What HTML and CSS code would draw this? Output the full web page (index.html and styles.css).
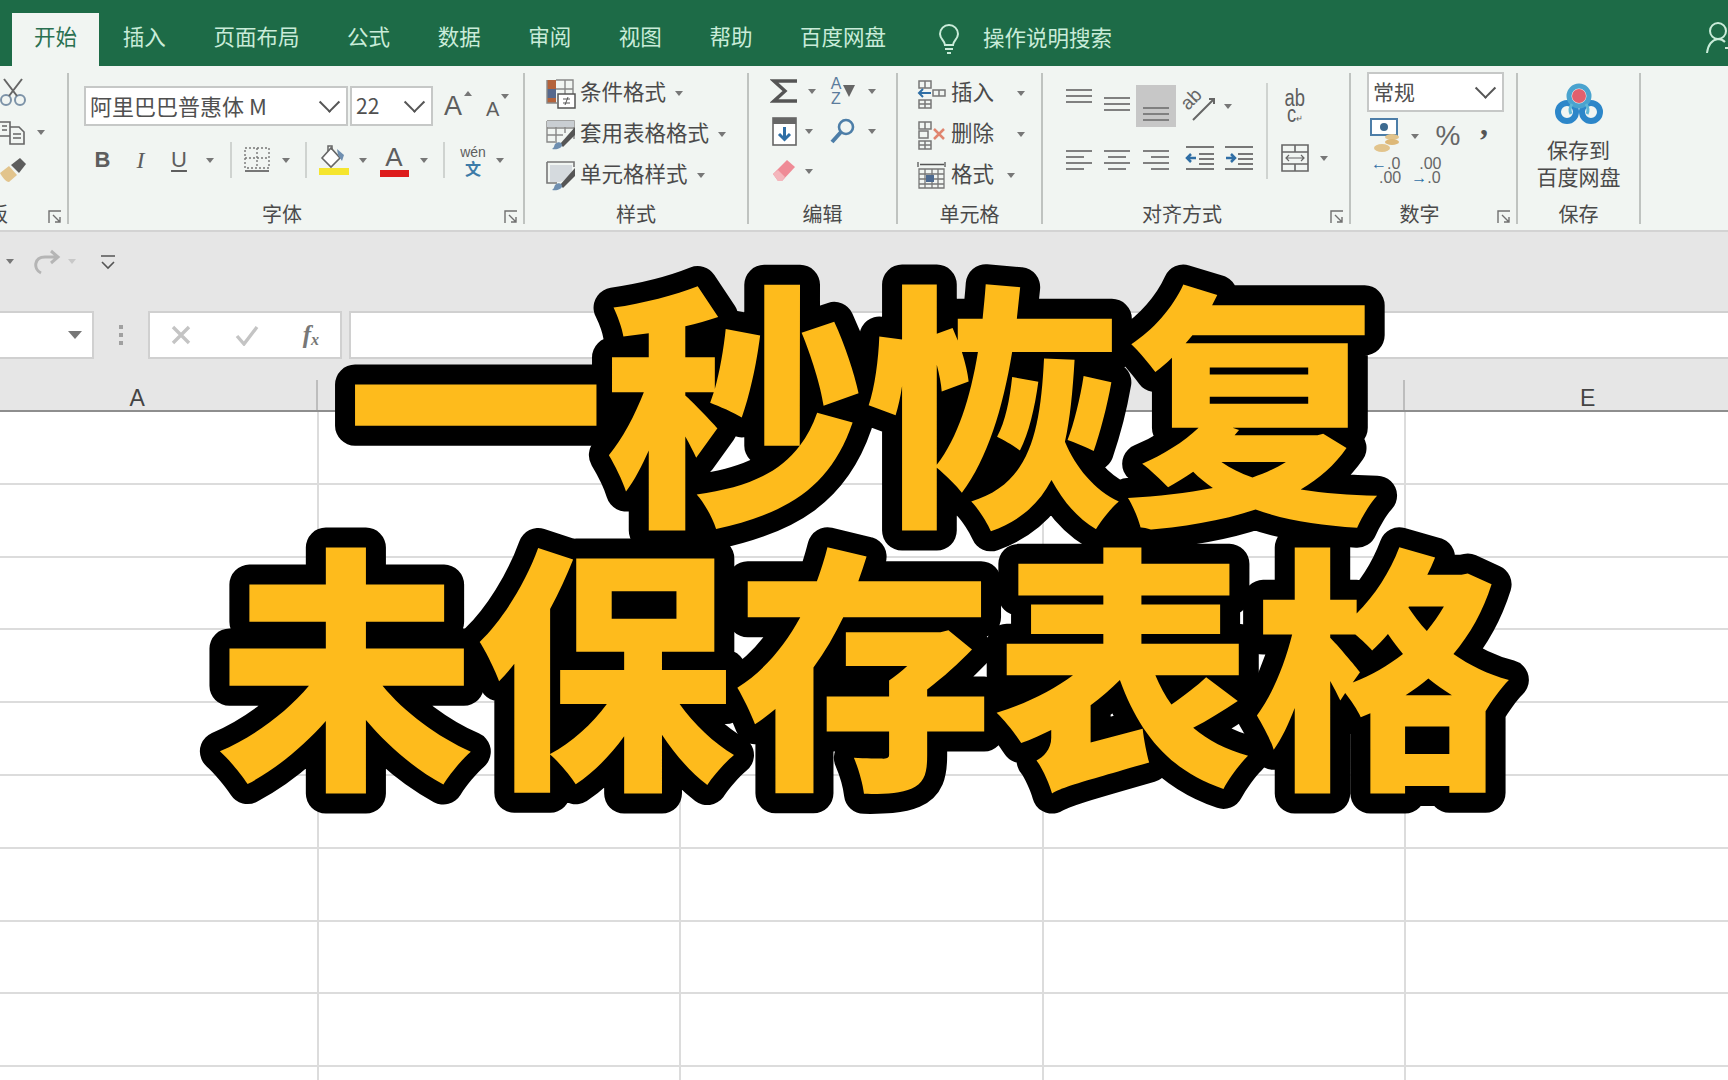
FILE: index.html
```html
<!DOCTYPE html>
<html lang="zh-CN">
<head>
  <meta charset="UTF-8">
  <title>一秒恢复未保存表格</title>
  <link rel="stylesheet" href="styles.css">
</head>
<body>
  <!-- Pestañas -->
  <div class="tabbar">
    <div class="tab active">开始</div>
    <div class="tab">插入</div>
    <div class="tab">页面布局</div>
    <div class="tab">公式</div>
    <div class="tab">数据</div>
    <div class="tab">审阅</div>
    <div class="tab">视图</div>
    <div class="tab">帮助</div>
    <div class="tab">百度网盘</div>
    <svg class="bulb" width="24" height="32" viewBox="0 0 24 32" fill="none" stroke="#c9ecd9" stroke-width="2"><path d="M8 22c0-4-5-6-5-11a9 9 0 0 1 18 0c0 5-5 7-5 11z"/><path d="M8 26h8M10 30h4"/></svg>
    <div class="search-text">操作说明搜索</div>
    <svg class="share" width="30" height="36" viewBox="0 0 30 36" fill="none" stroke="#c9ecd9" stroke-width="2"><circle cx="13" cy="11" r="8"/><path d="M2 33c1-8 5-13 11-14 3 0 5 1 7 3M20 28h10M25 23v10"/></svg>
  </div>

  <!-- Cinta -->
  <div class="ribbon">
    <div class="group group-clip">
      <div class="clip-rows">
        <svg width="26" height="30" viewBox="0 0 26 30" fill="none" stroke="#666" stroke-width="2"><circle cx="6" cy="23" r="5" stroke="#7d93a8"/><circle cx="20" cy="23" r="5" stroke="#7d93a8"/><path d="M9 19L22 2M17 19L4 2"/></svg>
        <div class="tool-row">
          <svg width="26" height="26" viewBox="0 0 26 26" fill="none" stroke="#666" stroke-width="1.6"><path d="M0 3h10v14H0M10 8h9l5 5v12H10z"/><path d="M13 15h8M13 19h8M2 7h5M2 11h5"/></svg>
          <span class="caret caret-copy"></span>
        </div>
        <svg width="28" height="28" viewBox="0 0 28 28"><path d="M0 16l9-7 8 9-8 7c-3 0-7-5-9-9z" fill="#e2c48c"/><path d="M11 8l9-7 6 6-7 9z" fill="#5d5d5d"/></svg>
      </div>
      <div class="group-label clip-label">剪贴板</div>
      <svg class="launcher" width="14" height="14" viewBox="0 0 14 14" fill="none" stroke="#707070" stroke-width="1.400"><path d="M1 13V1h12M5 5l7 7M12 7v5H7"/></svg>
    </div>

    <div class="group group-font">
      <div class="font-boxes">
        <div class="combo font-name"><span>阿里巴巴普惠体 M</span><span class="chevron"></span></div>
        <div class="combo font-size"><span>22</span><span class="chevron"></span></div>
        <div class="grow-a">A<span class="mini-up"></span></div>
        <div class="shrink-a">A<span class="mini-down"></span></div>
      </div>
      <div class="font-tools">
        <span class="bold">B</span>
        <span class="italic">I</span>
        <span class="under">U</span>
        <span class="caret"></span>
        <span class="vsep"></span>
        <svg width="26" height="26" viewBox="0 0 26 26" fill="none" stroke="#777" stroke-width="1.4" stroke-dasharray="2 2"><path d="M1 1h24v20H1zM13 1v20M1 11h24"/><path d="M1 24h24" stroke-dasharray="none" stroke-width="2"/></svg>
        <span class="caret"></span>
        <span class="vsep"></span>
        <svg width="32" height="32" viewBox="0 0 32 32"><path d="M4 14l9-10 9 10-9 9z" fill="#fff" stroke="#666" stroke-width="1.6"/><path d="M10 7V2h4v4" fill="none" stroke="#666" stroke-width="1.5"/><path d="M19 5l7 6-2 6-4-6z" fill="#6f8fb0"/><rect x="1" y="24" width="30" height="7" fill="#f5e52e"/></svg>
        <span class="caret"></span>
        <div class="color-a">A</div>
        <span class="caret"></span>
        <span class="vsep"></span>
        <div class="wen"><span>wén</span><b>文</b></div>
        <span class="caret"></span>
      </div>
      <div class="group-label with-launcher">字体</div>
      <svg class="launcher" width="14" height="14" viewBox="0 0 14 14" fill="none" stroke="#707070" stroke-width="1.400"><path d="M1 13V1h12M5 5l7 7M12 7v5H7"/></svg>
    </div>

    <div class="group group-styles">
      <div class="style-row">
        <svg width="30" height="30" viewBox="0 0 30 30"><path d="M1 1h9v9H1z" fill="#b4623a"/><path d="M1 10h9v9H1z" fill="#56688c"/><path d="M1 19h9v5H1z" fill="#b4623a"/><path d="M10 1h17v14M1 1v23h10M19 1v14M10 10h17" fill="none" stroke="#888" stroke-width="1.4"/><rect x="12" y="15" width="17" height="14" fill="#fff" stroke="#555" stroke-width="1.5"/><path d="M17 20h7M17 24h7M22 18l-3 8" stroke="#555" fill="none"/></svg>
        <span class="row-text">条件格式</span><span class="caret"></span>
      </div>
      <div class="style-row">
        <svg width="30" height="30" viewBox="0 0 30 30"><path d="M1 1h27v18M1 1v21h10M1 8h27M10 1v20M19 1v12M1 15h16" fill="none" stroke="#888" stroke-width="1.4"/><path d="M1 1h27v6H1z" fill="#c9ced2"/><path d="M29 7L14 24l3 3 12-12z" fill="#555"/><path d="M9 24c3-3 7-2 7 1s-5 5-10 4c2-1 2-3 3-5z" fill="#6f8fb0"/></svg>
        <span class="row-text">套用表格格式</span><span class="caret"></span>
      </div>
      <div class="style-row">
        <svg width="30" height="30" viewBox="0 0 30 30"><path d="M1 1h27v5M1 1v21h10" fill="none" stroke="#777" stroke-width="1.6"/><path d="M4 4h22v12L14 21H4z" fill="#d5dade"/><path d="M29 7L14 24l3 3 12-12z" fill="#555"/><path d="M9 24c3-3 7-2 7 1s-5 5-10 4c2-1 2-3 3-5z" fill="#6f8fb0"/></svg>
        <span class="row-text">单元格样式</span><span class="caret"></span>
      </div>
      <div class="group-label">样式</div>
    </div>

    <div class="group group-edit">
      <div class="edit-grid">
        <svg width="28" height="26" viewBox="0 0 28 26" fill="none" stroke="#555" stroke-width="3.4"><path d="M27 3H4l11 10L4 23h23"/></svg>
        <span class="caret"></span>
        <div class="sort-icon"><span class="az">A<br>Z</span><span class="funnel"></span></div>
        <span class="caret"></span>
        <svg width="25" height="29" viewBox="0 0 25 29"><rect x="1" y="1" width="23" height="27" fill="#fff" stroke="#666" stroke-width="1.6"/><rect x="1" y="1" width="23" height="6" fill="#666"/><path d="M12.500 10v12M7 17l5.500 5.500L18 17" fill="none" stroke="#2f6ea5" stroke-width="3"/></svg>
        <span class="caret caret-left"></span>
        <svg width="26" height="26" viewBox="0 0 26 26" fill="none"><circle cx="16" cy="9" r="7" stroke="#4d7ea8" stroke-width="2.600"/><path d="M11 14L2 24" stroke="#4d7ea8" stroke-width="4"/></svg>
        <span class="caret"></span>
        <svg width="24" height="24" viewBox="0 0 24 24"><path d="M1 15L15 1l8 7L10 22H6z" fill="#ef8b96"/><path d="M1 15l5 7h4l3-4-7-7z" fill="#f4b6bc"/></svg>
        <span class="caret caret-left"></span>
      </div>
      <div class="group-label">编辑</div>
    </div>

    <div class="group group-cells">
      <div class="cell-row">
        <svg width="30" height="30" viewBox="0 0 30 30" fill="none" stroke="#777" stroke-width="1.5"><path d="M2 2h12v7H2zM2 2v7M8 2v7M2 21h12v8H2zM8 21v8M2 25h12M16 11h12v6H16zM22 11v6"/><path d="M2 14h12M6 10l-4 4 4 4" stroke="#2f6ea5" stroke-width="2"/></svg>
        <span class="row-text">插入</span><span class="caret caret-far"></span>
      </div>
      <div class="cell-row">
        <svg width="30" height="30" viewBox="0 0 30 30" fill="none" stroke="#777" stroke-width="1.5"><path d="M2 2h12v7H2zM8 2v7M2 21h12v8H2zM8 21v8M2 25h12M2 11h9v7H2z"/><path d="M17 9l10 10M27 9L17 19" stroke="#e0856f" stroke-width="2.500"/></svg>
        <span class="row-text">删除</span><span class="caret caret-far"></span>
      </div>
      <div class="cell-row">
        <svg width="30" height="30" viewBox="0 0 30 30" fill="none" stroke="#777" stroke-width="1.3"><path d="M1 1v5M28 1v5M3 3.500h24" stroke="#555"/><path d="M2 8h25v19H2zM2 13h25M2 18h25M2 23h25M8 8v19M15 8v19M21 8v19"/><rect x="9" y="14" width="8" height="7" fill="#4d6a90" stroke="none"/></svg>
        <span class="row-text">格式</span><span class="caret"></span>
      </div>
      <div class="group-label">单元格</div>
    </div>

    <div class="group group-align">
      <div class="align-grid">
        <span class="lines lines-top"><i></i><i></i><i></i></span>
        <span class="lines lines-mid"><i></i><i></i><i></i></span>
        <span class="lines lines-bottom"><i></i><i></i><i></i></span>
        <svg class="rot-icon" width="32" height="32" viewBox="0 0 32 32" fill="none" stroke="#666" stroke-width="2"><path d="M9 30L29 10M25 9l5 0 0 5"/><text class="rot-text" transform="translate(4 21) rotate(-45)">ab</text></svg>
        <span class="caret caret-start"></span>
        <span class="vsep vsep-tall"></span>
        <div class="wrap-icon">ab<br>c<small>↵</small></div>
        <span></span>
        <span class="lines lines-left"><i></i><i></i><i></i><i></i></span>
        <span class="lines lines-center"><i></i><i></i><i></i><i></i></span>
        <span class="lines lines-right"><i></i><i></i><i></i><i></i></span>
        <svg width="30" height="26" viewBox="0 0 30 26" fill="none" stroke="#777" stroke-width="2"><path d="M1 2h28M14 9h15M14 14h15M14 19h15M1 24h28"/><path d="M11 13H2M6 9l-4 4 4 4" stroke="#2f6ea5" stroke-width="2.500"/></svg>
        <svg width="30" height="26" viewBox="0 0 30 26" fill="none" stroke="#777" stroke-width="2"><path d="M1 2h28M14 9h15M14 14h15M14 19h15M1 24h28"/><path d="M2 13h9M7 9l4 4-4 4" stroke="#2f6ea5" stroke-width="2.500"/></svg>
        <svg width="28" height="28" viewBox="0 0 28 28" fill="none" stroke="#666" stroke-width="1.600"><path d="M1 1h26v26H1zM1 8h26M1 20h26M14 1v7M14 20v7"/><path d="M5 14h18M8 11l-3 3 3 3M20 11l3 3-3 3" stroke-width="1.200"/></svg>
        <span class="caret"></span>
      </div>
      <div class="group-label with-launcher">对齐方式</div>
      <svg class="launcher" width="14" height="14" viewBox="0 0 14 14" fill="none" stroke="#707070" stroke-width="1.400"><path d="M1 13V1h12M5 5l7 7M12 7v5H7"/></svg>
    </div>

    <div class="group group-number">
      <div class="combo number-format"><span>常规</span><span class="chevron"></span></div>
      <div class="number-tools">
        <svg width="32" height="36" viewBox="0 0 32 36"><rect x="1" y="1" width="26" height="16" fill="#fff" stroke="#4d7ea8" stroke-width="2"/><circle cx="14" cy="9" r="4" fill="#3d6a90"/><ellipse cx="22" cy="19" rx="7" ry="3" fill="#e2c48c"/><ellipse cx="22" cy="24" rx="7" ry="3" fill="#ddb878"/><ellipse cx="12" cy="30" rx="8" ry="4" fill="#e2c48c"/></svg>
        <span class="caret"></span>
        <span class="percent">%</span>
        <span class="comma">,</span>
      </div>
      <div class="decimal-tools">
        <div class="decimal"><span><b>←</b>.0</span><span class="dec-pad">.00</span></div>
        <div class="decimal"><span class="dec-pad">.00</span><span><b>→</b>.0</span></div>
      </div>
      <div class="group-label with-launcher">数字</div>
      <svg class="launcher" width="14" height="14" viewBox="0 0 14 14" fill="none" stroke="#707070" stroke-width="1.400"><path d="M1 13V1h12M5 5l7 7M12 7v5H7"/></svg>
    </div>

    <div class="group group-save">
      <svg class="pan-logo" width="48" height="42" viewBox="0 0 48 42" fill="none"><circle cx="12" cy="29" r="9" stroke="#2c86c9" stroke-width="6"/><circle cx="36" cy="29" r="9" stroke="#2c86c9" stroke-width="6"/><circle cx="24" cy="13" r="10" stroke="#4aa3cf" stroke-width="5"/><circle cx="24" cy="13" r="7" fill="#e2606e"/><path d="M17 21c-2 3-3 6-1 10M31 21c2 3 3 6 1 10" stroke="#5fb7d6" stroke-width="3"/></svg>
      <div class="save-text">保存到<br>百度网盘</div>
      <div class="group-label">保存</div>
    </div>
  </div>

  <!-- Barra de acceso rápido y fórmulas -->
  <div class="qat">
    <span class="caret caret-qat"></span>
    <svg width="30" height="26" viewBox="0 0 30 26" fill="none" stroke="#b5b5b5" stroke-width="3"><path d="M9 24C1 20 2 8 13 8h12M19 2l7 6-7 6"/></svg>
    <span class="caret caret-light"></span>
    <svg class="qat-more" width="16" height="16" viewBox="0 0 16 16" fill="none" stroke="#555" stroke-width="1.600"><path d="M1 2h14M2 8l6 6 6-6"/></svg>
  </div>
  <div class="formula-bar">
    <div class="name-box"><span class="caret caret-name"></span></div>
    <div class="dots"><i></i><i></i><i></i></div>
    <div class="fx-box">
      <svg width="22" height="22" viewBox="0 0 22 22" stroke="#c4c4c4" stroke-width="3.400"><path d="M3 3l16 16M19 3L3 19"/></svg>
      <svg width="24" height="22" viewBox="0 0 24 22" fill="none" stroke="#c4c4c4" stroke-width="3.400"><path d="M2 12l7 8L22 3"/></svg>
      <span class="fx">f<sub>x</sub></span>
    </div>
    <div class="formula-input"></div>
  </div>

  <!-- Hoja -->
  <div class="col-headers">
    <div class="col-head">A</div>
    <div class="col-head"></div>
    <div class="col-head"></div>
    <div class="col-head"></div>
    <div class="col-head last">E</div>
  </div>
  <div class="sheet"></div>

  <!-- Título sobre la hoja -->
  <svg class="title" width="1728" height="1080" viewBox="0 0 1728 1080">
    <text x="864" y="506">一秒恢复</text>
    <text x="864" y="769">未保存表格</text>
  </svg>
</body>
</html>
```

FILE: styles.css
```css
/* Estilos generales */
html, body {
  margin: 0;
  padding: 0;
  height: 1080px;
  overflow: hidden;
}

body {
  position: relative;
  width: 1728px;
  background: #fff;
  font-family: "Noto Sans CJK SC", "Noto Sans", sans-serif;
  color: #4a4a4a;
}

/* Pestañas */
.tabbar {
  height: 66px;
  background: #1d6b47;
  display: flex;
  align-items: flex-end;
  padding-left: 12px;
  box-sizing: border-box;
  color: #c9ecd9;
  font-size: 21.500px;
  position: relative;
}

.tab {
  height: 53px;
  line-height: 46px;
  padding: 0 23.800px;
}

.tab.active {
  background: #f1f5f2;
  color: #2a7051;
  padding: 0 22px;
}

.bulb {
  margin: 0 0 11px 27px;
}

.search-text {
  height: 53px;
  line-height: 47px;
  margin-left: 22px;
}

.share {
  position: absolute;
  right: -7px;
  top: 20px;
}

/* Cinta */
.ribbon {
  height: 166px;
  box-sizing: border-box;
  background: #f1f5f2;
  border-bottom: 2px solid #d3d3d3;
  padding-top: 7px;
  display: flex;
}

.group {
  position: relative;
  height: 151px;
  box-sizing: border-box;
  border-right: 2px solid #bfc3c0;
  flex: none;
  display: flex;
  flex-direction: column;
}

.group-label {
  position: absolute;
  left: 0;
  right: 0;
  bottom: -5px;
  text-align: center;
  font-size: 20px;
  line-height: 30px;
}

.group-label.with-launcher {
  right: 28px;
}

.clip-label {
  left: -52px;
  right: auto;
  width: 60px;
  text-align: right;
}

.launcher {
  position: absolute;
  right: 5px;
  bottom: 0;
}

.caret {
  display: inline-block;
  width: 0;
  height: 0;
  border-left: 4.500px solid transparent;
  border-right: 4.500px solid transparent;
  border-top: 5px solid #777;
  flex: none;
}

.vsep {
  width: 2px;
  height: 36px;
  background: #cfd3d0;
}

.row-text {
  font-size: 21.500px;
  line-height: 30px;
  padding-bottom: 6px;
  white-space: nowrap;
}

/* Portapapeles */
.group-clip {
  width: 69px;
}

.clip-rows {
  display: flex;
  flex-direction: column;
  gap: 12px;
  margin-top: 4px;
}

.tool-row {
  display: flex;
  align-items: center;
}

.caret-copy {
  margin-left: 11px;
}

/* Fuente */
.group-font {
  width: 456px;
  padding-left: 15px;
}

.font-boxes {
  display: flex;
  align-items: center;
  margin-top: 13px;
}

.combo {
  height: 40px;
  box-sizing: border-box;
  background: #fff;
  border: 2px solid #c6c8c7;
  display: flex;
  align-items: center;
  justify-content: space-between;
  padding: 0 9px 0 4px;
  font-size: 21px;
  color: #505050;
}

.combo > span:first-child {
  padding-bottom: 3px;
}

.font-name {
  width: 264px;
  font-size: 22px;
}

.font-size {
  width: 83px;
  margin-left: 2px;
}

.chevron {
  width: 15px;
  height: 15px;
  box-sizing: border-box;
  border-right: 2px solid #555;
  border-bottom: 2px solid #555;
  transform: rotate(45deg) translate(-3px, -3px);
}

.grow-a, .shrink-a {
  position: relative;
  font-family: "Liberation Sans", sans-serif;
  color: #5e5e5e;
}

.grow-a {
  font-size: 27px;
  margin-left: 11px;
}

.shrink-a {
  font-size: 20px;
  margin-left: 24px;
  top: 3px;
}

.mini-up, .mini-down {
  position: absolute;
  top: 0;
  right: -10px;
  width: 0;
  height: 0;
  border-left: 4px solid transparent;
  border-right: 4px solid transparent;
}

.mini-up {
  border-bottom: 5px solid #777;
}

.mini-down {
  border-top: 5px solid #777;
  top: -4px;
}

.font-tools {
  display: grid;
  grid-template-columns: 37px 39px 38px 24px 18px 34px 24px 16px 40px 18px 44px 16px 24px 34px 20px;
  justify-items: center;
  align-items: center;
  height: 38px;
  margin-top: 15px;
  font-family: "Liberation Sans", sans-serif;
  font-size: 22px;
  color: #5e5e5e;
}

.bold {
  font-weight: bold;
}

.italic {
  font-family: "Liberation Serif", serif;
  font-style: italic;
  font-size: 24px;
}

.under {
  text-decoration: underline;
  text-underline-offset: 3px;
}

.color-a {
  width: 29px;
  text-align: center;
  font-size: 26px;
  line-height: 26px;
  height: 26px;
  border-bottom: 7px solid #dd1c1c;
}

.wen {
  display: flex;
  flex-direction: column;
  align-items: center;
  font-size: 14px;
  line-height: 15px;
}

.wen b {
  font-family: "Noto Sans CJK SC", sans-serif;
  color: #3d7ba8;
  font-size: 16px;
  line-height: 16px;
}

/* Estilos de celda */
.group-styles {
  width: 224px;
  padding-left: 21px;
}

.style-row, .cell-row {
  display: flex;
  align-items: center;
  height: 41px;
  gap: 4px;
}

.style-row .caret {
  margin-left: 5px;
}

/* Edición */
.group-edit {
  width: 149px;
  padding-left: 16px;
}

.edit-grid {
  display: grid;
  grid-template-columns: 38px 18px 44px 14px;
  grid-template-rows: 40px 40px 40px;
  justify-items: center;
  align-items: center;
  margin-top: -2px;
}

.caret-left {
  margin-right: 6px;
}

.sort-icon {
  display: flex;
  align-items: center;
  gap: 2px;
}

.az {
  font-family: "Liberation Sans", sans-serif;
  font-size: 16px;
  line-height: 15px;
  color: #5b7c9c;
  text-align: center;
}

.funnel {
  width: 0;
  height: 0;
  border-left: 6px solid transparent;
  border-right: 6px solid transparent;
  border-top: 12px solid #666;
}

/* Celdas */
.group-cells {
  width: 145px;
  padding-left: 19px;
}

.cell-row .caret {
  margin-left: 9px;
}

.cell-row .caret-far {
  margin-left: 19px;
}

/* Alineación */
.group-align {
  width: 308px;
  padding-left: 17px;
}

.align-grid {
  display: grid;
  grid-template-columns: 38px 38px 40px 48px 30px 26px 30px 28px;
  grid-template-rows: 42px 38px;
  row-gap: 12px;
  margin-top: 12px;
  justify-items: center;
  align-items: center;
}

.lines {
  display: flex;
  flex-direction: column;
  gap: 4px;
  width: 26px;
}

.lines i {
  display: block;
  height: 2px;
  background: #808080;
}

.lines-top {
  align-self: start;
  margin-top: 4px;
}

.lines-mid {
  align-self: center;
  margin-top: -4px;
}

.lines-bottom {
  width: 40px;
  height: 42px;
  background: #c7c7c7;
  box-sizing: border-box;
  padding: 22px 7px 0;
}

.lines-left, .lines-center, .lines-right {
  margin-top: 3px;
}

.lines-left i:nth-child(even) {
  width: 18px;
}

.lines-center i:nth-child(even) {
  width: 18px;
  align-self: center;
}

.lines-right i:nth-child(even) {
  width: 18px;
  align-self: flex-end;
}

.rot-icon {
  overflow: visible;
}

.rot-text {
  font-family: "Liberation Sans", sans-serif;
  font-size: 19px;
  fill: #666;
  stroke: none;
}

.caret-start {
  justify-self: start;
}

.vsep-tall {
  grid-column: 6;
  grid-row: 1 / 3;
  height: 96px;
}

.wrap-icon {
  font-family: "Liberation Sans", sans-serif;
  font-size: 23px;
  line-height: 16px;
  color: #5e5e5e;
  text-align: center;
  margin-top: 4px;
  transform: scaleX(0.8);
}

.wrap-icon small {
  font-size: 10px;
}

/* Número */
.group-number {
  width: 167px;
  padding-left: 16px;
}

.number-format {
  width: 137px;
  height: 40px;
  margin-top: -1px;
}

.number-tools {
  display: grid;
  grid-template-columns: 38px 20px 46px 26px;
  justify-items: center;
  align-items: center;
  height: 36px;
  margin-top: 2px;
}

.percent {
  font-family: "Liberation Sans", sans-serif;
  font-size: 28px;
  color: #666;
}

.comma {
  font-family: "Liberation Serif", serif;
  font-size: 32px;
  font-weight: bold;
  line-height: 20px;
  color: #555;
  margin-bottom: 24px;
}

.decimal-tools {
  display: flex;
  gap: 10px;
  margin: 7px 0 0 4px;
}

.decimal {
  display: flex;
  flex-direction: column;
  font-family: "Liberation Sans", sans-serif;
  font-size: 16px;
  line-height: 14px;
  color: #666;
}

.decimal b {
  color: #2f6ea5;
}

.dec-pad {
  padding-left: 8px;
}

/* Guardar */
.group-save {
  width: 123px;
  align-items: center;
}

.pan-logo {
  margin-top: 10px;
}

.save-text {
  font-size: 21px;
  line-height: 27px;
  text-align: center;
  margin-top: 11px;
  white-space: nowrap;
}

/* Barra de acceso rápido */
.qat {
  height: 67px;
  background: #e6e6e6;
  display: flex;
  align-items: center;
  gap: 6px;
  padding: 0 0 8px 6px;
  box-sizing: border-box;
}

.caret-qat {
  margin-right: 12px;
}

.caret-light {
  border-top-color: #c8c8c8;
}

.qat-more {
  margin-left: 18px;
}

/* Barra de fórmulas */
.formula-bar {
  height: 60px;
  background: #e6e6e6;
  display: flex;
  align-items: flex-start;
  padding-top: 12px;
  box-sizing: border-box;
}

.name-box, .fx-box, .formula-input {
  height: 48px;
  box-sizing: border-box;
  background: #fff;
  border: 2px solid #d0d0d0;
}

.name-box {
  width: 94px;
  border-left: 0;
  display: flex;
  align-items: center;
  justify-content: flex-end;
  padding-right: 10px;
}

.caret-name {
  border-left-width: 7px;
  border-right-width: 7px;
  border-top-width: 8px;
}

.dots {
  width: 54px;
  height: 48px;
  display: flex;
  flex-direction: column;
  align-items: center;
  justify-content: center;
  gap: 4px;
}

.dots i {
  width: 4px;
  height: 4px;
  background: #a0a0a0;
}

.fx-box {
  width: 194px;
  display: flex;
  align-items: center;
  justify-content: space-between;
  padding: 0 21px 0 20px;
}

.fx {
  font-family: "Liberation Serif", serif;
  font-style: italic;
  font-weight: bold;
  font-size: 25px;
  color: #777;
}

.fx sub {
  font-size: 16px;
  vertical-align: -2px;
}

.formula-input {
  flex: 1;
  margin-left: 7px;
  border-right: 0;
}

/* Hoja */
.col-headers {
  height: 53px;
  box-sizing: border-box;
  background: #e6e6e6;
  border-bottom: 2px solid #8e8e8e;
  margin-left: -43px;
  display: grid;
  grid-template-columns: 360.500px repeat(3, 362.600px) 1fr;
  grid-template-rows: 51px;
}

.col-head {
  position: relative;
  text-align: center;
  font-family: "Liberation Sans", sans-serif;
  font-size: 23px;
  line-height: 78px;
  color: #444;
}

.col-head::after {
  content: "";
  position: absolute;
  right: 0;
  top: 21px;
  bottom: 0;
  width: 2px;
  background: #bdbdbd;
}

.col-head.last {
  width: 365px;
}

.col-head.last::after {
  display: none;
}

.sheet {
  height: 668px;
  background-color: #fff;
  background-image:
    repeating-linear-gradient(to bottom, transparent 0 70.800px, #dcdcdc 70.800px 72.800px),
    repeating-linear-gradient(to right, transparent 0 360.600px, #dcdcdc 360.600px 362.600px);
  background-position: 0 0, -44px 0;
}

/* Título */
.title {
  position: absolute;
  left: 0;
  top: 0;
}

.title text {
  font-family: "Noto Sans CJK SC", sans-serif;
  font-weight: 900;
  font-size: 259px;
  text-anchor: middle;
  fill: #febb1c;
  stroke: #000;
  stroke-width: 40px;
  stroke-linejoin: round;
  paint-order: stroke fill;
}
```
